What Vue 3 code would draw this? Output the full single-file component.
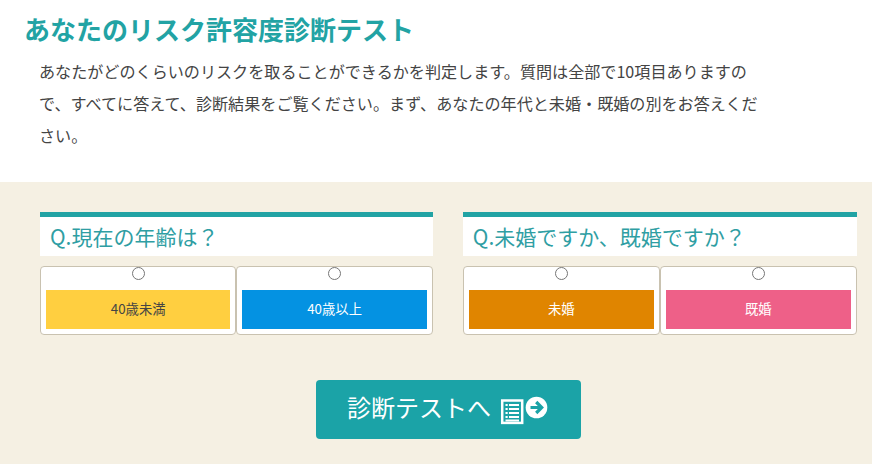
<script setup>
const questions = [
  { id: 'age', title: '現在の年齢は？', options: [
    { label: '40歳未満', cls: 'yellow' },
    { label: '40歳以上', cls: 'blue' },
  ]},
  { id: 'married', title: '未婚ですか、既婚ですか？', options: [
    { label: '未婚', cls: 'orange' },
    { label: '既婚', cls: 'pink' },
  ]},
]
</script>

<template>
  <div class="page">
    <section class="intro">
      <h1 class="title">あなたのリスク許容度診断テスト</h1>
      <p class="lead">あなたがどのくらいのリスクを取ることができるかを判定します。質問は全部で10項目ありますので、すべてに答えて、診断結果をご覧ください。まず、あなたの年代と未婚・既婚の別をお答えください。</p>
    </section>
    <section class="form">
      <div class="questions">
        <div v-for="q in questions" :key="q.id" class="question">
          <h2 class="q-title">Q.{{ q.title }}</h2>
          <div class="options">
            <label v-for="o in q.options" :key="o.label" class="option">
              <input class="radio" type="radio" :name="q.id" />
              <span class="bar" :class="o.cls">{{ o.label }}</span>
            </label>
          </div>
        </div>
      </div>
      <div class="actions">
        <button class="submit" type="button">
          <span class="submit-label">診断テストへ</span>
          <svg class="icon" width="48" height="30" viewBox="0 0 48 30">
            <rect x="2.2" y="4.5" width="20" height="22.4" fill="none" stroke="#fff" stroke-width="2.5" />
            <path d="M5.5 9h2.2M9 9h10M5.5 13h2.2M9 13h10M5.5 17h2.2M9 17h10M5.5 21h2.2M9 21h10M5.5 24.4h13.5" stroke="#fff" stroke-width="2" fill="none" />
            <circle cx="36.5" cy="11.5" r="10.8" fill="#fff" />
            <path d="M30.5 11.5h11M36.2 6l5.5 5.5l-5.5 5.5" fill="none" stroke="#1ba3a7" stroke-width="3.2" />
          </svg>
        </button>
      </div>
    </section>
  </div>
</template>

<style scoped>
.page {
  width: 872px;
  height: 464px;
  overflow: hidden;
  font-family: "Noto Sans CJK JP", "Noto Sans", sans-serif;
  color: #444;
}
.intro {
  height: 182px;
  background: #fff;
  padding: 11px 0 0 24px;
  box-sizing: border-box;
}
.title {
  margin: 0;
  font-size: 26px;
  line-height: 36px;
  font-weight: 700;
  color: #22a3a4;
}
.lead {
  margin: 8px 0 0 15px;
  width: 725px;
  font-size: 16.1px;
  line-height: 32px;
  color: #444;
}
.form {
  height: 282px;
  background: #f5f0e3;
  padding: 30px 15px 0 40px;
  box-sizing: border-box;
}
.questions {
  display: grid;
  grid-template-columns: 392.8px 394px;
  gap: 30px;
}
.q-title {
  margin: 0;
  height: 44px;
  box-sizing: border-box;
  padding-left: 10px;
  background: #fff;
  border-top: 5px solid #22a3a4;
  font-size: 21px;
  line-height: 38px;
  font-weight: 400;
  color: #2f9ea3;
}
.options {
  display: flex;
  margin-top: 10px;
}
.option {
  flex: 1 1 50%;
  height: 69px;
  box-sizing: border-box;
  display: flex;
  flex-direction: column;
  align-items: center;
  padding: 0 5px;
  background: #fff;
  border: 1px solid #c9c2b0;
  border-radius: 4px;
}
.radio {
  width: 13px;
  height: 13px;
  margin: 0 0 10px;
  flex: none;
}
.bar {
  width: 100%;
  height: 39px;
  box-sizing: border-box;
  padding-bottom: 2px;
  display: flex;
  align-items: center;
  justify-content: center;
  font-size: 13.33px;
  color: #fff;
}
.yellow { background: #ffcf40; color: #444; }
.blue { background: #0492e2; }
.orange { background: #e08500; }
.pink { background: #ee6088; }
.actions {
  display: flex;
  justify-content: flex-start;
  margin-top: 45px;
  padding-left: 276px;
}
.submit {
  width: 265px;
  height: 59px;
  display: flex;
  align-items: center;
  justify-content: flex-start;
  gap: 9px;
  padding: 0 0 0 31px;
  border: none;
  border-radius: 4px;
  background: #1ba3a7;
  color: #fff;
  font-family: inherit;
  font-size: 24px;
}
.submit-label { margin-bottom: 6px; }
.icon { flex: none; margin-top: 3px; }
</style>
